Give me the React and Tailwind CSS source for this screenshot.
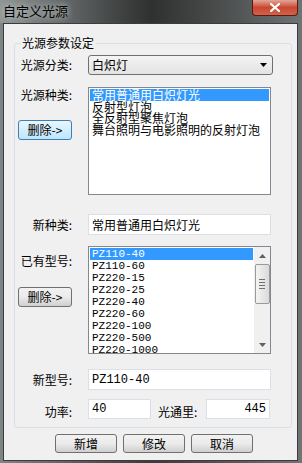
import React from "react";

const cjk = { fontFamily: '"Noto Sans CJK SC", "Noto Sans", sans-serif' };
const mono = { fontFamily: '"Liberation Mono", "Noto Sans CJK SC", monospace' };

const kinds = ["常用普通用白炽灯光", "反射型灯泡", "全反射型聚焦灯泡", "舞台照明与电影照明的反射灯泡"];
const models = ["PZ110-40", "PZ110-60", "PZ220-15", "PZ220-25", "PZ220-40", "PZ220-60", "PZ220-100", "PZ220-500", "PZ220-1000"];

function Btn({ children, focused, className = "" }) {
  return (
    <div
      className={`flex items-center justify-center rounded-[3px] border text-[12px] leading-none text-black ${
        focused
          ? "border-[#3c7fb1] bg-gradient-to-b from-[#eaf6fd] to-[#bee6fd]"
          : "border-[#707070] bg-gradient-to-b from-[#f2f2f2] via-[#ebebeb] to-[#cfcfcf]"
      } ${className}`}
    >
      {children}
    </div>
  );
}

function Label({ children, className = "" }) {
  return <div className={`w-[57px] shrink-0 text-right text-[12px] leading-none text-black ${className}`}>{children}</div>;
}

function Input({ value, className = "", right, monoFont }) {
  return (
    <div
      className={`flex items-center border border-[#dcdfe5] bg-white px-[3px] text-[12px] leading-none text-black ${
        right ? "justify-end" : ""
      } ${className}`}
      style={monoFont ? mono : undefined}
    >
      {value}
    </div>
  );
}

export default function App() {
  return (
    <div className="flex h-[463px] w-[302px] flex-col overflow-hidden bg-gradient-to-r from-[#7d8585] via-[#3a3b3c] to-[#707474]" style={cjk}>
      {/* title bar */}
      <div className="flex h-[23px] shrink-0 items-start justify-between bg-gradient-to-r from-[#8f9696] via-[#2f3030] to-[#6f7373]">
        <div className="pl-[3px] pt-[3px] text-[13px] leading-[16px] text-black [text-shadow:0_0_6px_#e8eaea]">自定义光源</div>
        <div className="mr-[4px] flex h-[16px] w-[46px] items-center justify-center rounded-b-[4px] border border-t-0 border-[#5a1a12] bg-gradient-to-b from-[#e0a597] via-[#c9462f] to-[#d2634a]">
          <svg width="10" height="9" viewBox="0 0 10 9">
            <path d="M1 1l8 7M9 1L1 8" stroke="#fff" strokeWidth="2.2" strokeLinecap="square" />
          </svg>
        </div>
      </div>

      {/* client area */}
      <div className="ml-[3px] mr-[4px] mb-[2px] flex flex-1 flex-col border border-[#3c3c3c] bg-[#f0f0f0]">
        {/* group box */}
        <div className="relative ml-[10px] mr-[5px] mt-[19px] flex h-[385px] flex-col rounded-[3px] border border-[#d5dfe5] pb-[8px]">
          <span className="absolute left-[5px] top-[-8px] bg-[#f0f0f0] px-[2px] text-[12px] leading-[14px] text-black">光源参数设定</span>

          {/* 光源分类 */}
          <div className="mt-[11px] flex items-center">
            <Label>光源分类:</Label>
            <div className="ml-[16px] flex h-[20px] w-[185px] items-center justify-between rounded-[3px] border border-[#707070] bg-gradient-to-b from-[#f4f4f4] to-[#e3e3e3] pl-[3px] pr-[5px] text-[12px] leading-none text-black">
              <span>白炽灯</span>
              <svg width="7" height="4" viewBox="0 0 7 4"><path d="M0 0h7L3.5 4z" fill="#000" /></svg>
            </div>
          </div>

          {/* 光源种类 */}
          <div className="mt-[12px] flex">
            <div className="flex w-[57px] shrink-0 flex-col items-end">
              <Label className="mt-[2px]">光源种类:</Label>
              <Btn focused className="mt-[19px] h-[20px] w-[54px]">删除-&gt;</Btn>
            </div>
            <div className="ml-[16px] flex h-[108px] w-[183px] flex-col border border-[#828790] bg-white p-[1px]">
              {kinds.map((k, i) => (
                <div
                  key={k}
                  className={`h-[11.5px] pl-[2px] text-[12px] leading-[11.5px] ${i === 0 ? "bg-[#3399ff] text-white" : "text-black"}`}
                >
                  {k}
                </div>
              ))}
            </div>
          </div>

          {/* 新种类 */}
          <div className="mt-[19px] flex items-center">
            <Label>新种类:</Label>
            <Input value="常用普通用白炽灯光" className="ml-[16px] h-[21px] w-[183px]" />
          </div>

          {/* 已有型号 */}
          <div className="mt-[11px] flex">
            <div className="flex w-[57px] shrink-0 flex-col items-end">
              <Label className="mt-[9px]">已有型号:</Label>
              <Btn className="mt-[20px] h-[20px] w-[54px]">删除-&gt;</Btn>
            </div>
            <div className="ml-[16px] flex h-[108px] w-[183px] border border-[#828790] bg-white">
              <div className="flex flex-1 flex-col overflow-hidden p-[1px]">
                {models.map((m, i) => (
                  <div
                    key={m}
                    className={`h-[12px] shrink-0 pl-[2px] text-[11px] leading-[12px] ${i === 0 ? "bg-[#3399ff] text-white" : "text-black"}`}
                    style={mono}
                  >
                    {m}
                  </div>
                ))}
              </div>
              <div className="flex w-[16px] flex-col items-center bg-[#f0f0f0]">
                <div className="flex h-[17px] items-center justify-center">
                  <svg width="7" height="4" viewBox="0 0 7 4"><path d="M3.5 0L7 4H0z" fill="#606060" /></svg>
                </div>
                <div className="flex h-[40px] w-[15px] flex-col items-center justify-center gap-[2px] rounded-[2px] border border-[#9a9a9a] bg-gradient-to-r from-[#f4f4f4] to-[#dadada]">
                  <div className="h-px w-[6px] bg-[#707070]" />
                  <div className="h-px w-[6px] bg-[#707070]" />
                  <div className="h-px w-[6px] bg-[#707070]" />
                  <div className="h-px w-[6px] bg-[#707070]" />
                </div>
                <div className="flex-1" />
                <div className="flex h-[17px] items-center justify-center">
                  <svg width="7" height="4" viewBox="0 0 7 4"><path d="M0 0h7L3.5 4z" fill="#606060" /></svg>
                </div>
              </div>
            </div>
          </div>

          {/* 新型号 */}
          <div className="mt-[15px] flex items-center">
            <Label>新型号:</Label>
            <Input value="PZ110-40" monoFont className="ml-[16px] h-[21px] w-[183px] text-[11px]" />
          </div>

          {/* 功率 / 光通里 */}
          <div className="mt-[9px] flex items-center">
            <Label className="mt-[6px]">功率:</Label>
            <Input value="40" monoFont className="ml-[16px] h-[20px] w-[63px] items-start pt-[3px] text-[11px]" />
            <div className="ml-[7px] mt-[6px] w-[42px] text-[12px] leading-none text-black">光通里:</div>
            <Input value="445" monoFont right className="ml-[6px] h-[20px] w-[64px] items-start pt-[3px] text-[11px]" />
          </div>
        </div>

        {/* buttons */}
        <div className="mt-[6px] flex gap-[6px] pl-[51px]">
          <Btn className="h-[19px] w-[62px]">新增</Btn>
          <Btn className="h-[19px] w-[62px]">修改</Btn>
          <Btn className="h-[19px] w-[62px]">取消</Btn>
        </div>
      </div>
    </div>
  );
}
